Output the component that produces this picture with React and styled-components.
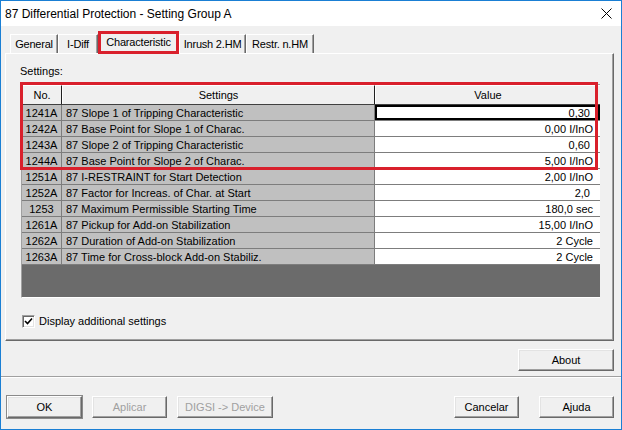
import React from "react";
import styled, { createGlobalStyle } from "styled-components";

const GlobalStyle = createGlobalStyle`
  html, body {
    margin: 0;
    padding: 0;
    background: #f0f0f0;
  }
  body {
    font-family: "Liberation Sans", Arial, sans-serif;
    font-size: 11px;
    color: #000;
  }
`;

const Window = styled.div`
  width: 622px;
  height: 430px;
  box-sizing: border-box;
  border: 1px solid #1a7fd4;
  background: #f0f0f0;
  display: flex;
  flex-direction: column;
  overflow: hidden;
`;

const TitleBar = styled.div`
  height: 25px;
  flex: none;
  background: #fff;
  display: flex;
  align-items: center;
  justify-content: space-between;
  padding: 0 9px 0 4px;
  font-size: 12px;
`;

const Body = styled.div`
  padding: 5px 7px 0 4px;
  display: flex;
  flex-direction: column;
`;

const TabStrip = styled.div`
  height: 22px;
  display: flex;
  align-items: flex-end;
  padding-left: 5px;
  position: relative;
  z-index: 1;
`;

const Tab = styled.div`
  position: relative;
  box-sizing: border-box;
  width: ${(p) => p.$w}px;
  height: ${(p) => (p.$active ? "23px" : "19px")};
  margin-bottom: ${(p) => (p.$active ? "-1px" : "0")};
  padding-top: ${(p) => (p.$active ? "4px" : "3px")};
  text-align: center;
  letter-spacing: -0.2px;
  background: #f0f0f0;
  border-top: 1px solid #fff;
  border-left: 1px solid #fff;
  border-right: 1px solid #696969;
  box-shadow: inset -1px 0 #a0a0a0;
  white-space: nowrap;
  z-index: ${(p) => (p.$active ? 2 : 0)};

  &::after {
    content: "";
    display: ${(p) => (p.$marked ? "block" : "none")};
    position: absolute;
    left: -1px;
    right: -1px;
    top: -1px;
    bottom: 0;
    border: 3px solid #d9202c;
  }
`;

const Panel = styled.div`
  height: 288px;
  box-sizing: border-box;
  border-top: 1px solid #fff;
  border-left: 1px solid #fff;
  border-right: 1px solid #696969;
  border-bottom: 1px solid #696969;
  box-shadow: inset -1px -1px #a0a0a0;
  padding: 11px 14px 0 15px;
  display: flex;
  flex-direction: column;
`;

const Label = styled.div`
  line-height: 13px;
  margin-bottom: 6px;
  margin-left: -1px;
`;

const GridWrap = styled.div`
  position: relative;
  width: 579px;
  height: 214px;
`;

const Grid = styled.div`
  box-sizing: border-box;
  width: 100%;
  height: 100%;
  border-top: 1px solid #a0a0a0;
  border-left: 1px solid #a0a0a0;
  border-bottom: 1px solid #fff;
  display: flex;
  flex-direction: column;
  background: #6b6b6b;
`;

const HeaderRow = styled.div`
  display: grid;
  grid-template-columns: 40px 313px 1fr;
  height: 20px;
  flex: none;
  background: #f0f0f0;
  border-bottom: 1px solid #404040;
  box-sizing: border-box;
`;

const HeaderCell = styled.div`
  display: flex;
  align-items: center;
  justify-content: center;
  border-right: 1px solid #202020;
  border-top: 1px solid #fff;
  border-left: 1px solid #fff;

  &:last-child {
    border-right: none;
  }
`;

const Row = styled.div`
  display: grid;
  grid-template-columns: 40px 313px 1fr;
  height: 16px;
  flex: none;
`;

const Cell = styled.div`
  box-sizing: border-box;
  display: flex;
  align-items: center;
  justify-content: ${(p) =>
    p.$align === "center" ? "center" : p.$align === "right" ? "flex-end" : "flex-start"};
  padding: ${(p) => (p.$align === "right" ? "0 7px 0 0" : p.$align === "left" ? "0 0 0 4px" : "0")};
  background: ${(p) => (p.$white ? "#fff" : "#c0c0c0")};
  border-right: 1px solid #7d7d7d;
  border-bottom: 1px solid #7d7d7d;
  white-space: pre;
  box-shadow: ${(p) => (p.$selected ? "inset 0 0 0 2px #000" : "none")};

  &:last-child {
    border-right: none;
  }
`;

const Highlight = styled.div`
  position: absolute;
  left: -1px;
  top: ${(p) => p.$top}px;
  width: 578px;
  height: ${(p) => p.$height}px;
  box-sizing: border-box;
  border: 3px solid #d9202c;
  pointer-events: none;
`;

const CheckRow = styled.label`
  display: flex;
  align-items: center;
  gap: 4px;
  margin-top: 17px;
  margin-left: 1px;
  line-height: 13px;
`;

const CheckBox = styled.span`
  width: 13px;
  height: 13px;
  box-sizing: border-box;
  background: #fff;
  border-top: 1px solid #a0a0a0;
  border-left: 1px solid #a0a0a0;
  border-right: 1px solid #fff;
  border-bottom: 1px solid #fff;
  box-shadow: inset 1px 1px #696969, inset -1px -1px #e3e3e3;
  display: flex;
  align-items: center;
  justify-content: center;
`;

const ButtonRow = styled.div`
  display: flex;
  justify-content: ${(p) => (p.$spread ? "space-between" : "flex-end")};
  gap: 10px;
`;

const Group = styled.div`
  display: flex;
  gap: ${(p) => p.$gap || 10}px;
`;

const Button = styled.button`
  width: ${(p) => p.$w || 75}px;
  height: 22px;
  box-sizing: border-box;
  font-family: "Liberation Sans", Arial, sans-serif;
  font-size: 11px;
  color: ${(p) => (p.disabled ? "#a0a0a0" : "#000")};
  background: #f0f0f0;
  border-top: 1px solid #fff;
  border-left: 1px solid #fff;
  border-right: 1px solid #696969;
  border-bottom: 1px solid #696969;
  box-shadow: inset -1px -1px #a0a0a0, inset 1px 1px #e3e3e3;
  padding: 0;
  ${(p) => p.$default && `outline: 1px solid #8a8a8a;`}
`;

const AboutRow = styled(ButtonRow)`
  margin-top: 8px;
`;

const Separator = styled.div`
  margin-top: 5px;
  height: 0;
  border-top: 1px solid #a0a0a0;
  border-bottom: 1px solid #fff;
`;

const Footer = styled(ButtonRow)`
  margin-top: 18px;
  padding: 0 7px 0 6px;
`;

const rows = [
  ["1241A", "87 Slope 1 of Tripping Characteristic", "0,30 "],
  ["1242A", "87 Base Point for Slope 1 of Charac.", "0,00 I/InO"],
  ["1243A", "87 Slope 2 of Tripping Characteristic", "0,60 "],
  ["1244A", "87 Base Point for Slope 2 of Charac.", "5,00 I/InO"],
  ["1251A", "87 I-RESTRAINT for Start Detection", "2,00 I/InO"],
  ["1252A", "87 Factor for Increas. of Char. at Start", "2,0 "],
  ["1253", "87 Maximum Permissible Starting Time", "180,0 sec"],
  ["1261A", "87 Pickup for Add-on Stabilization", "15,00 I/InO"],
  ["1262A", "87 Duration of Add-on Stabilization", "2 Cycle"],
  ["1263A", "87 Time for Cross-block Add-on Stabiliz.", "2 Cycle"],
];

const tabs = [
  { label: "General", w: 48 },
  { label: "I-Diff", w: 40 },
  { label: "Characteristic", w: 81, active: true },
  { label: "Inrush 2.HM", w: 67 },
  { label: "Restr. n.HM", w: 68 },
];

export default function App() {
  return (
    <>
      <GlobalStyle />
      <Window>
        <TitleBar>
          <span>87 Differential Protection - Setting Group A</span>
          <svg width="11" height="11" viewBox="0 0 11 11">
            <path d="M0.5 0.5 L10.5 10.5 M10.5 0.5 L0.5 10.5" stroke="#000" strokeWidth="1" />
          </svg>
        </TitleBar>
        <Body>
          <TabStrip>
            {tabs.map((t) => (
              <Tab key={t.label} $w={t.w} $active={t.active} $marked={t.active}>
                {t.label}
              </Tab>
            ))}
          </TabStrip>
          <Panel>
            <Label>Settings:</Label>
            <GridWrap>
              <Grid>
                <HeaderRow>
                  <HeaderCell>No.</HeaderCell>
                  <HeaderCell>Settings</HeaderCell>
                  <HeaderCell>Value</HeaderCell>
                </HeaderRow>
                {rows.map(([no, name, value], i) => (
                  <Row key={no}>
                    <Cell $align="center">{no}</Cell>
                    <Cell $align="left">{name}</Cell>
                    <Cell $align="right" $white $selected={i === 0}>
                      {value}
                    </Cell>
                  </Row>
                ))}
              </Grid>
              <Highlight $top={-2} $height={88} />
            </GridWrap>
            <CheckRow>
              <CheckBox>
                <svg width="9" height="9" viewBox="0 0 9 9">
                  <path d="M1 4 L3.5 6.5 L8 1.5" stroke="#000" strokeWidth="1.6" fill="none" />
                </svg>
              </CheckBox>
              Display additional settings
            </CheckRow>
          </Panel>
          <AboutRow>
            <Button $w={96}>About</Button>
          </AboutRow>
        </Body>
        <Separator />
        <Footer $spread>
          <Group>
            <Button $default>OK</Button>
            <Button disabled>Aplicar</Button>
            <Button $w={96} disabled>
              DIGSI -&gt; Device
            </Button>
          </Group>
          <Group $gap={20}>
            <Button $w={65}>Cancelar</Button>
            <Button>Ajuda</Button>
          </Group>
        </Footer>
      </Window>
    </>
  );
}
